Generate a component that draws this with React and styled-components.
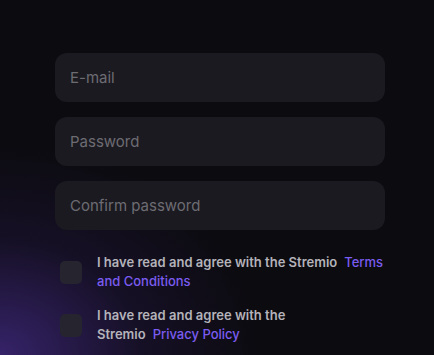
import styled, { createGlobalStyle } from "styled-components";

const Global = createGlobalStyle`
  html, body {
    margin: 0;
    padding: 0;
    height: 100%;
  }
  body {
    background: #0c0b10;
    font-family: Inter, "Noto Sans", sans-serif;
  }
`;

const Page = styled.div`
  width: 434px;
  height: 355px;
  overflow: hidden;
  background:
    radial-gradient(ellipse 260px 210px at 0% 100%, rgba(70, 44, 140, 0.72), rgba(50, 30, 100, 0.25) 55%, rgba(12, 11, 16, 0) 100%),
    #0c0b10;
  padding: 53px 0 0 55px;
  box-sizing: border-box;
`;

const Form = styled.div`
  width: 330px;
  display: flex;
  flex-direction: column;
  gap: 15px;
`;

const Field = styled.input`
  height: 49px;
  box-sizing: border-box;
  border: none;
  outline: none;
  border-radius: 12px;
  background: #1b1a20;
  padding: 0 15px;
  font-family: inherit;
  font-size: 15px;
  color: #ddd;
  &::placeholder {
    color: #6d6c73;
  }
`;

const Agreements = styled.div`
  margin-top: 8px;
  display: flex;
  flex-direction: column;
  gap: 15px;
`;

const Row = styled.label`
  display: flex;
  align-items: center;
  gap: 15px;
  padding-left: 5px;
`;

const Box = styled.span`
  flex: none;
  width: 22px;
  height: 23px;
  border-radius: 5px;
  background: #26242e;
`;

const Text = styled.span`
  font-size: 13px;
  font-weight: 600;
  line-height: 19px;
  letter-spacing: 0;
  color: #b4b3ba;
`;

const Link = styled.a`
  color: #7a5cf0;
  font-weight: 500;
  margin-left: 7px;
  text-decoration: none;
`;

function Agreement({ text, link }) {
  return (
    <Row>
      <Box />
      <Text>
        {text}<Link href="#">{link}</Link>
      </Text>
    </Row>
  );
}

export default function App() {
  return (
    <>
      <Global />
      <Page>
        <Form>
          <Field type="email" placeholder="E-mail" />
          <Field type="password" placeholder="Password" />
          <Field type="password" placeholder="Confirm password" />
          <Agreements>
            <Agreement text="I have read and agree with the Stremio" link="Terms and Conditions" />
            <Agreement text="I have read and agree with the Stremio" link="Privacy Policy" />
          </Agreements>
        </Form>
      </Page>
    </>
  );
}
